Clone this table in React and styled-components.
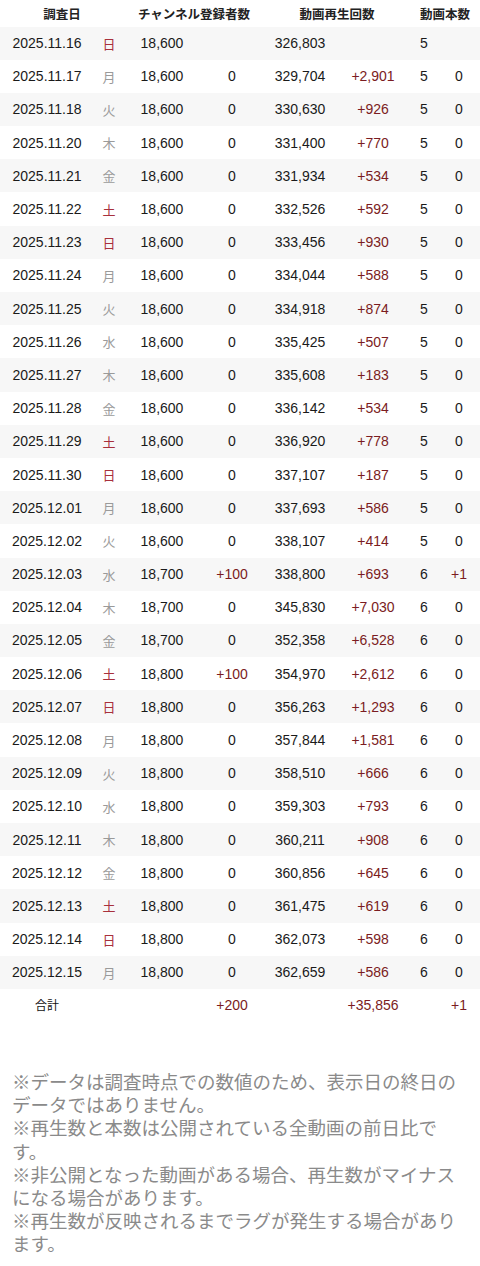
import React from 'react';
import styled, { createGlobalStyle } from 'styled-components';

const GlobalStyle = createGlobalStyle`
  body {
    margin: 0;
    background: #fff;
    font-family: "Liberation Sans", "Noto Sans CJK JP", sans-serif;
    color: #1a1a1a;
  }
`;

const COLS = '94px 30px 76px 64px 72px 74px 28px 42px';

const Page = styled.main`
  width: 480px;
  padding-bottom: 20px;
`;

const HeaderRow = styled.div`
  display: grid;
  grid-template-columns: 124px 140px 146px 70px;
  height: 26.5px;
  align-items: center;
  font-family: "Noto Sans CJK JP", sans-serif;
  font-weight: 700;
  font-size: 12.5px;
  color: #222;
  text-align: center;
`;

const Row = styled.div`
  display: grid;
  grid-template-columns: ${COLS};
  height: ${p => (p.$total ? '32px' : '33.2px')};
  align-items: center;
  text-align: center;
  font-size: 14px;
  background: ${p => (p.$striped ? '#f7f7f7' : '#fff')};
`;

const Cell = styled.span`
  color: ${p => (p.$diff ? '#7b1c22' : '#1a1a1a')};
`;

const Weekday = styled.span`
  font-family: "Noto Sans CJK JP", sans-serif;
  font-size: 13px;
  color: ${p => (p.$holiday ? '#a8303c' : '#9a9a9a')};
`;

const TotalLabel = styled.span`
  font-family: "Noto Sans CJK JP", sans-serif;
  font-size: 12px;
  color: #111;
`;

const Notes = styled.div`
  margin-top: 49px;
  padding: 0 12px;
  font-family: "Noto Sans CJK JP", sans-serif;
  font-size: 18.5px;
  line-height: 23.2px;
  color: #8a8a8a;
`;

const Note = styled.p`
  margin: 0;
`;

const rows = [
  ['2025.11.16', '日', '18,600', '', '326,803', '', '5', ''],
  ['2025.11.17', '月', '18,600', '0', '329,704', '+2,901', '5', '0'],
  ['2025.11.18', '火', '18,600', '0', '330,630', '+926', '5', '0'],
  ['2025.11.20', '木', '18,600', '0', '331,400', '+770', '5', '0'],
  ['2025.11.21', '金', '18,600', '0', '331,934', '+534', '5', '0'],
  ['2025.11.22', '土', '18,600', '0', '332,526', '+592', '5', '0'],
  ['2025.11.23', '日', '18,600', '0', '333,456', '+930', '5', '0'],
  ['2025.11.24', '月', '18,600', '0', '334,044', '+588', '5', '0'],
  ['2025.11.25', '火', '18,600', '0', '334,918', '+874', '5', '0'],
  ['2025.11.26', '水', '18,600', '0', '335,425', '+507', '5', '0'],
  ['2025.11.27', '木', '18,600', '0', '335,608', '+183', '5', '0'],
  ['2025.11.28', '金', '18,600', '0', '336,142', '+534', '5', '0'],
  ['2025.11.29', '土', '18,600', '0', '336,920', '+778', '5', '0'],
  ['2025.11.30', '日', '18,600', '0', '337,107', '+187', '5', '0'],
  ['2025.12.01', '月', '18,600', '0', '337,693', '+586', '5', '0'],
  ['2025.12.02', '火', '18,600', '0', '338,107', '+414', '5', '0'],
  ['2025.12.03', '水', '18,700', '+100', '338,800', '+693', '6', '+1'],
  ['2025.12.04', '木', '18,700', '0', '345,830', '+7,030', '6', '0'],
  ['2025.12.05', '金', '18,700', '0', '352,358', '+6,528', '6', '0'],
  ['2025.12.06', '土', '18,800', '+100', '354,970', '+2,612', '6', '0'],
  ['2025.12.07', '日', '18,800', '0', '356,263', '+1,293', '6', '0'],
  ['2025.12.08', '月', '18,800', '0', '357,844', '+1,581', '6', '0'],
  ['2025.12.09', '火', '18,800', '0', '358,510', '+666', '6', '0'],
  ['2025.12.10', '水', '18,800', '0', '359,303', '+793', '6', '0'],
  ['2025.12.11', '木', '18,800', '0', '360,211', '+908', '6', '0'],
  ['2025.12.12', '金', '18,800', '0', '360,856', '+645', '6', '0'],
  ['2025.12.13', '土', '18,800', '0', '361,475', '+619', '6', '0'],
  ['2025.12.14', '日', '18,800', '0', '362,073', '+598', '6', '0'],
  ['2025.12.15', '月', '18,800', '0', '362,659', '+586', '6', '0'],
];

const isPlus = v => v.startsWith('+');

export default function App() {
  return (
    <Page>
      <GlobalStyle />
      <HeaderRow>
        <span>調査日</span>
        <span>チャンネル登録者数</span>
        <span>動画再生回数</span>
        <span>動画本数</span>
      </HeaderRow>

      {rows.map((r, i) => (
        <Row key={r[0]} $striped={i % 2 === 0}>
          <Cell>{r[0]}</Cell>
          <Weekday $holiday={r[1] === '日' || r[1] === '土'}>{r[1]}</Weekday>
          <Cell>{r[2]}</Cell>
          <Cell $diff={isPlus(r[3])}>{r[3]}</Cell>
          <Cell>{r[4]}</Cell>
          <Cell $diff={isPlus(r[5])}>{r[5]}</Cell>
          <Cell>{r[6]}</Cell>
          <Cell $diff={isPlus(r[7])}>{r[7]}</Cell>
        </Row>
      ))}

      <Row $total>
        <TotalLabel>合計</TotalLabel>
        <span />
        <span />
        <Cell $diff>+200</Cell>
        <span />
        <Cell $diff>+35,856</Cell>
        <span />
        <Cell $diff>+1</Cell>
      </Row>

      <Notes>
        <Note>※データは調査時点での数値のため、表示日の終日のデータではありません。</Note>
        <Note>※再生数と本数は公開されている全動画の前日比です。</Note>
        <Note>※非公開となった動画がある場合、再生数がマイナスになる場合があります。</Note>
        <Note>※再生数が反映されるまでラグが発生する場合があります。</Note>
      </Notes>
    </Page>
  );
}
